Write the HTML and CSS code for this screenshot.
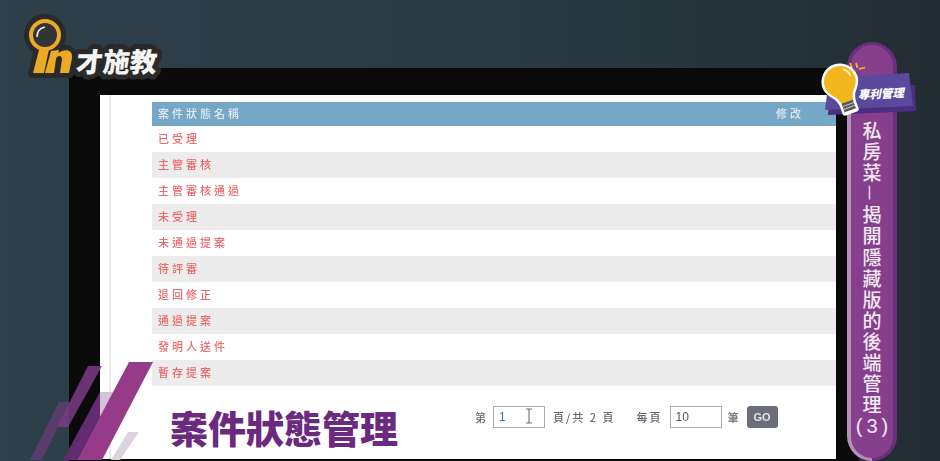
FILE: index.html
```html
<!DOCTYPE html>
<html lang="zh-Hant">
<head>
<meta charset="utf-8">
<title>案件狀態管理</title>
<link rel="stylesheet" href="styles.css">
</head>
<body>
<main class="stage">
  <section class="monitor">
    <div class="screen">
      <div class="content">
        <table class="status-table">
          <thead>
            <tr><th><span class="cell-text">案件狀態名稱</span></th><th class="edit-col"><span class="cell-text">修改</span></th></tr>
          </thead>
          <tbody>
            <tr><td><span class="cell-text">已受理</span></td><td></td></tr>
            <tr><td><span class="cell-text">主管審核</span></td><td></td></tr>
            <tr><td><span class="cell-text">主管審核通過</span></td><td></td></tr>
            <tr><td><span class="cell-text">未受理</span></td><td></td></tr>
            <tr><td><span class="cell-text">未通過提案</span></td><td></td></tr>
            <tr><td><span class="cell-text">待評審</span></td><td></td></tr>
            <tr><td><span class="cell-text">退回修正</span></td><td></td></tr>
            <tr><td><span class="cell-text">通過提案</span></td><td></td></tr>
            <tr><td><span class="cell-text">發明人送件</span></td><td></td></tr>
            <tr><td><span class="cell-text">暫存提案</span></td><td></td></tr>
          </tbody>
        </table>
        <div class="pager">
          <span>第</span>
          <span class="field field-page">1</span>
          <span>頁/共 2 頁</span>
          <span class="per-page">每頁</span>
          <span class="field field-size">10</span>
          <span>筆</span>
          <span class="go">GO</span>
        </div>
      </div>
    </div>
  </section>
</main>

<svg class="cursor" width="8" height="16" viewBox="0 0 8 16" aria-hidden="true">
  <path d="M1 1h6M4 1v14M1 15h6" fill="none" stroke="#6f7276" stroke-width="1.1"/>
</svg>

<svg class="slashes" width="160" height="100" viewBox="0 0 160 100" aria-hidden="true">
  <polygon points="59,41 70,41 42,99 30,99" fill="#7d3a86" opacity=".55"/>
  <polygon points="88,5 102,5 68,66 57,66" fill="#7b3c86" opacity=".85"/>
  <polygon points="100,31 100,56 77,99 63,99" fill="#642c70"/>
  <polygon points="100,31 114,31 100,56" fill="#d5c3da"/>
  <polygon points="129,1 153,1 102,99 77,99" fill="#953b8a"/>
  <polygon points="128,71 139,71 120,99 111,99" fill="#dcd2e0"/>
</svg>

<h1 class="page-title">案件狀態管理</h1>

<aside class="banner">
  <div class="banner-inner">
    <div class="banner-text">
      <span>私</span><span>房</span><span>菜</span><span class="dash">—</span><span>揭</span><span>開</span><span>隱</span><span>藏</span><span>版</span><span>的</span><span>後</span><span>端</span><span>管</span><span>理</span><span class="part">(3)</span>
    </div>
  </div>
</aside>

<svg class="ribbon" width="120" height="80" viewBox="820 55 120 80" aria-hidden="true">
  <polygon points="830,90 915,85 916,111 828,115" fill="#4a2f80"/>
  <polygon points="829,78 909,73 913,106 825,110" fill="#5b4a9c"/>
  <path d="M850 63l2 5M856 63l1.5 5M859 69l6-1.5" stroke="#f5bb1e" stroke-width="1.8" fill="none"/>
  <g transform="translate(840 82) rotate(-20)">
    <path class="bulb-glass" d="M0-16C-9-16-16-9-16 0-16 7-11 10-8 15-7 18-6.5 19-6 22V31H6V22C6.5 19 7 18 8 15 11 10 16 7 16 0 16-9 9-16 0-16Z"/>
    <path class="bulb-fill" d="M0-16C-9-16-16-9-16 0-16 7-11 10-8 15-7 18-6.5 19-6 22H6C6.5 19 7 18 8 15 11 10 16 7 16 0 16-9 9-16 0-16Z"/>
    <path d="M7-11c3 2 5 5 5 9" stroke="#fff4cc" stroke-width="1.6" fill="none"/>
    <rect x="-6" y="21" width="12" height="9" fill="#55575a"/>
    <path d="M-6 24H6M-6 27H6" stroke="#c9c9c9" stroke-width="1"/>
  </g>
  <text class="ribbon-label" transform="translate(858 99) rotate(-2.5)">專利管理</text>
</svg>

<svg class="logo" width="170" height="90" viewBox="0 0 170 90" role="img">
  <g class="logo-outline">
    <circle cx="45" cy="35" r="16"/>
    <path d="M39 50L49 49 44 73H33ZM51 51L59 50 58.5 53C63 49 73 48 72 58L69 73H60L62 59C62 55 57 55 56 59L54 73H45Z"/>
    <text class="logo-word" transform="translate(75 72) skewX(-6)">才施教</text>
  </g>
  <circle cx="45" cy="35" r="14" fill="#333435" stroke="#eba924" stroke-width="4"/>
  <path d="M37 37c0-6 3-9 8-10" stroke="#e8e8e8" stroke-width="1.6" fill="none"/>
  <path d="M39 50L49 49 44 73H33ZM51 51L59 50 58.5 53C63 49 73 48 72 58L69 73H60L62 59C62 55 57 55 56 59L54 73H45Z" fill="#eba924"/>
  <text class="logo-word logo-fill" transform="translate(75 72) skewX(-6)">才施教</text>
</svg>
</body>
</html>
```

FILE: styles.css
```css
* { box-sizing: border-box; }

html, body {
  margin: 0;
  width: 940px;
  height: 461px;
  overflow: hidden;
}

body {
  position: relative;
  font-family: "Noto Sans CJK TC", "Liberation Sans", sans-serif;
  background: linear-gradient(90deg, #2d3f49 0%, #2b3b44 50%, #222d33 100%);
}

.stage {
  height: 461px;
  padding: 68px 0 0 69px;
  filter: blur(0.45px);
}

.monitor {
  width: 790px;
  height: 393px;
  padding: 27px 23px 2px 31px;
  background: #0a0a0a;
  border-radius: 7px 7px 0 0;
}

.screen {
  height: 364px;
  padding-left: 9px;
  background: #fff;
  overflow: hidden;
}

.content {
  height: 100%;
  padding: 7px 0 0 41px;
  border-left: 2px solid #ececec;
}

.status-table {
  width: 684px;
  border-collapse: collapse;
  table-layout: fixed;
  font-size: 11px;
  font-weight: 500;
  letter-spacing: 3px;
}

.cell-text {
  display: block;
  margin-top: -3px;
}

.status-table th {
  height: 24px;
  padding: 0 0 0 6px;
  background: #74a8c6;
  color: #dfeaf1;
  font-weight: 500;
  text-align: left;
}

.status-table th.edit-col {
  width: 66px;
}

.status-table td {
  height: 26px;
  padding: 0 0 0 6px;
  color: #ec6a6a;
}

.status-table tbody tr:nth-child(even) td {
  background: #ececec;
}

.pager {
  display: flex;
  align-items: center;
  height: 22px;
  margin-top: 20px;
  padding-left: 323px;
  font-size: 11px;
  font-weight: 500;
  letter-spacing: 2px;
  color: #666973;
}

.field {
  width: 52px;
  height: 22px;
  margin-left: 5px;
  padding-left: 5px;
  border: 1px solid #a9abb0;
  font-family: "Liberation Sans", sans-serif;
  font-size: 12px;
  line-height: 20px;
  letter-spacing: 0;
}

.field-page {
  margin-right: 8px;
  color: #3f78a8;
}

.field-size {
  margin-left: 7px;
  margin-right: 6px;
  color: #5f524c;
}

.per-page {
  margin-left: 21px;
}

.go {
  width: 31px;
  height: 22px;
  margin-left: 6px;
  border-radius: 3px;
  background: #6b6e78;
  color: #e4e5e8;
  font-family: "Liberation Sans", sans-serif;
  font-size: 11px;
  font-weight: 700;
  line-height: 22px;
  letter-spacing: 0;
  text-align: center;
}

.cursor {
  position: absolute;
  left: 525px;
  top: 408px;
}

.slashes {
  position: absolute;
  left: 0;
  top: 361px;
}

.page-title {
  position: absolute;
  left: 170px;
  top: 399px;
  margin: 0;
  font-size: 38px;
  font-weight: 900;
  line-height: 56px;
  color: #6b2a80;
  white-space: nowrap;
}

.banner {
  position: absolute;
  left: 847px;
  top: 42px;
  width: 50px;
  height: 419px;
  padding: 3px 4px 3px;
  border-radius: 25px;
  background:
    linear-gradient(#6a2f78 0 72px, transparent 72px),
    linear-gradient(90deg, #b78fba 50%, #6a2f78 50%);
}

.banner-inner {
  height: 100%;
  padding-top: 74px;
  border-radius: 21px;
  background: #853f8c;
}

.banner-text {
  display: flex;
  flex-direction: column;
  align-items: center;
  font-size: 19px;
  font-weight: 500;
  line-height: 21.1px;
  color: #f1e8f1;
}

.banner-text .dash {
  font-weight: 400;
  transform: rotate(90deg) scaleX(0.9);
}

.banner-text .part {
  margin-top: 2px;
  padding-left: 4px;
  font-size: 20px;
  letter-spacing: 4px;
  font-family: "Liberation Sans", sans-serif;
  font-weight: 400;
}

.ribbon {
  position: absolute;
  left: 820px;
  top: 55px;
}

.bulb-glass {
  fill: #fff;
  stroke: #fff;
  stroke-width: 5px;
  stroke-linejoin: round;
}

.bulb-fill {
  fill: #f2b61f;
}

.ribbon-label {
  fill: #fff;
  font-size: 11.5px;
  font-weight: 900;
  font-style: italic;
}

.logo {
  position: absolute;
  left: 0;
  top: 0;
}

.logo-outline {
  fill: #2a2a2a;
  stroke: #2a2a2a;
  stroke-width: 10px;
  stroke-linejoin: round;
}

.logo-word {
  font-size: 27px;
  font-weight: 900;
}

.logo-fill {
  fill: #f5f5f5;
}
```
